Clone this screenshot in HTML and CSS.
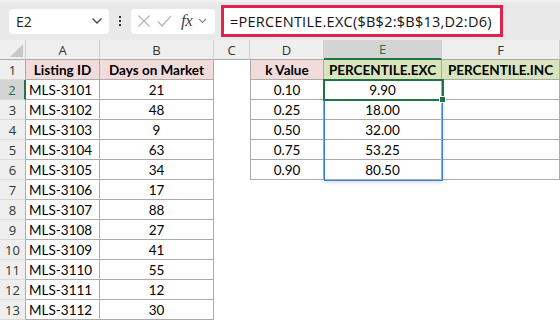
FILE: index.html
```html
<!DOCTYPE html>
<html>
<head>
    <meta charset="utf-8">
    <link rel="stylesheet" href="styles.css">
</head>
<body>
    <div class="fbar">
        <div class="namebox">
            <span>E2</span>
            <svg class="chev" width="12" height="8" viewBox="0 0 12 8"><path d="M1.5 1.5 L6 6 L10.5 1.5" fill="none" stroke="#444" stroke-width="1.3"/></svg>
        </div>
        <div class="dots"><i></i><i></i><i></i></div>
        <div class="fxbox">
            <svg width="14" height="14" viewBox="0 0 14 14"><path d="M1.5 1.5 L12.5 12.5 M12.5 1.5 L1.5 12.5" stroke="#b4b4b4" stroke-width="1.2" fill="none"/></svg>
            <svg width="15" height="14" viewBox="0 0 15 14"><path d="M1 7.5 L5 12 L14 2" stroke="#b4b4b4" stroke-width="1.2" fill="none"/></svg>
            <span class="fx">fx</span>
            <svg width="9" height="6" viewBox="0 0 9 6"><path d="M1 1 L4.5 4.5 L8 1" fill="none" stroke="#888" stroke-width="1.1"/></svg>
        </div>
        <div class="formula">=PERCENTILE.EXC($B$2:$B$13,D2:D6)</div>
    </div>

    <div class="sheet">
        <div class="corner"><svg width="18" height="18" viewBox="0 0 18 18"><path d="M17 4 L17 17 L4 17 Z" fill="#c8c8c8"/></svg></div>
        <div class="colhead">A</div>
        <div class="colhead">B</div>
        <div class="colhead">C</div>
        <div class="colhead">D</div>
        <div class="colhead sel">E</div>
        <div class="colhead">F</div>

        <div class="rowhead">1</div>
        <div class="c bd head pink">Listing ID</div>
        <div class="c bd head pink">Days on Market</div>
        <div class="c"></div>
        <div class="c bd head pink lft">k Value</div>
        <div class="c bd head green">PERCENTILE.EXC</div>
        <div class="c bd head green">PERCENTILE.INC</div>

        <div class="rowhead sel">2</div>
        <div class="c bd left">MLS-3101</div>
        <div class="c bd">21</div>
        <div class="c"></div>
        <div class="c bd lft">0.10</div>
        <div class="c bd">9.90</div>
        <div class="c bd"></div>

        <div class="rowhead">3</div>
        <div class="c bd left">MLS-3102</div>
        <div class="c bd">48</div>
        <div class="c"></div>
        <div class="c bd lft">0.25</div>
        <div class="c bd">18.00</div>
        <div class="c bd"></div>

        <div class="rowhead">4</div>
        <div class="c bd left">MLS-3103</div>
        <div class="c bd">9</div>
        <div class="c"></div>
        <div class="c bd lft">0.50</div>
        <div class="c bd">32.00</div>
        <div class="c bd"></div>

        <div class="rowhead">5</div>
        <div class="c bd left">MLS-3104</div>
        <div class="c bd">63</div>
        <div class="c"></div>
        <div class="c bd lft">0.75</div>
        <div class="c bd">53.25</div>
        <div class="c bd"></div>

        <div class="rowhead">6</div>
        <div class="c bd left">MLS-3105</div>
        <div class="c bd">34</div>
        <div class="c"></div>
        <div class="c bd lft">0.90</div>
        <div class="c bd">80.50</div>
        <div class="c bd"></div>

        <div class="rowhead">7</div>
        <div class="c bd left">MLS-3106</div>
        <div class="c bd">17</div>
        <div class="c span4"></div>

        <div class="rowhead">8</div>
        <div class="c bd left">MLS-3107</div>
        <div class="c bd">88</div>
        <div class="c span4"></div>

        <div class="rowhead">9</div>
        <div class="c bd left">MLS-3108</div>
        <div class="c bd">27</div>
        <div class="c span4"></div>

        <div class="rowhead">10</div>
        <div class="c bd left">MLS-3109</div>
        <div class="c bd">41</div>
        <div class="c span4"></div>

        <div class="rowhead">11</div>
        <div class="c bd left">MLS-3110</div>
        <div class="c bd">55</div>
        <div class="c span4"></div>

        <div class="rowhead">12</div>
        <div class="c bd left">MLS-3111</div>
        <div class="c bd">12</div>
        <div class="c span4"></div>

        <div class="rowhead">13</div>
        <div class="c bd left">MLS-3112</div>
        <div class="c bd">30</div>
        <div class="c span4"></div>

        <div class="spill"></div>
        <div class="active"><i></i></div>
    </div>
</body>
</html>
```

FILE: styles.css
```css
body, html {
    margin: 0;
    padding: 0;
    width: 100%;
    height: 100%;
    overflow: hidden;
    background: #fff;
}

/* formula bar */
.fbar {
    height: 40px;
    box-sizing: border-box;
    background: #e9e9e9;
    border-top: 2px solid #f2f2f2;
    display: flex;
    align-items: center;
    padding: 0 0 0 9px;
    font-family: "Open Sans", "Noto Sans", sans-serif;
}
.namebox {
    width: 100px;
    height: 25px;
    box-sizing: border-box;
    background: #fff;
    border-radius: 4px;
    display: flex;
    align-items: center;
    justify-content: space-between;
    padding: 0 6px 0 7px;
    font-size: 14px;
    color: #222;
}
.dots {
    width: 22px;
    display: flex;
    flex-direction: column;
    align-items: center;
    gap: 2px;
}
.dots i {
    width: 2px;
    height: 2px;
    background: #333;
}
.fxbox {
    width: 84px;
    height: 25px;
    box-sizing: border-box;
    background: #fff;
    border-radius: 4px;
    display: flex;
    align-items: center;
    padding: 0 4px 0 6px;
    gap: 6px;
}
.fx {
    font-family: "Liberation Serif", serif;
    font-style: italic;
    font-size: 17px;
    color: #444;
    margin-left: 3px;
    letter-spacing: -0.5px;
}
.formula {
    margin-left: 6px;
    width: 282px;
    height: 32px;
    box-sizing: border-box;
    background: #fff;
    border: 3px solid #e0234e;
    display: flex;
    align-items: center;
    padding-left: 6px;
    font-size: 14.5px;
    letter-spacing: 0.25px;
    color: #111;
    white-space: nowrap;
}

/* grid */
.sheet {
    position: relative;
    display: grid;
    grid-template-columns: 26px 74px 114px 36px 74px 118px 118px;
    grid-auto-rows: 20px;
    font-family: Lato, "Liberation Sans", sans-serif;
    font-size: 13.5px;
    color: #000;
}
.corner, .colhead, .rowhead {
    box-sizing: border-box;
    background: #efefef;
    color: #333;
    display: flex;
    align-items: center;
    justify-content: center;
    font-family: "Open Sans", "Noto Sans", sans-serif;
    font-size: 13px;
}
.corner {
    border-right: 1px solid #d0d0d0;
    border-bottom: 1px solid #ababab;
    align-items: flex-end;
    justify-content: flex-end;
    padding: 0 1px 1px 0;
}
.colhead {
    border-right: 1px solid #d0d0d0;
    border-bottom: 1px solid #ababab;
}
.colhead.sel {
    background: #d4d4d4;
    color: #217346;
    border-bottom: 2px solid #217346;
}
.rowhead {
    border-right: 1px solid #ababab;
    border-bottom: 1px solid #dadada;
}
.rowhead.sel {
    background: #d4d4d4;
    color: #217346;
    border-right: 2px solid #217346;
}
.c {
    box-sizing: border-box;
    display: flex;
    align-items: center;
    justify-content: center;
    white-space: nowrap;
    overflow: hidden;
}
.c.bd {
    border-right: 1px solid #ababab;
    border-bottom: 1px solid #ababab;
}
.c.lft {
    border-left: 1px solid #ababab;
}
.c.left {
    justify-content: flex-start;
    padding-left: 3px;
}
.c.head {
    font-weight: bold;
}
.pink {
    background: #f2dcdb;
}
.green {
    background: #d8e4bc;
}
.span4 {
    grid-column: span 4;
}

/* selection overlays */
.spill {
    position: absolute;
    left: 324px;
    top: 40px;
    width: 119px;
    height: 101px;
    box-sizing: border-box;
    border: 1px solid #3b7ddd;
    box-shadow: 0 2px 3px rgba(0, 0, 0, 0.12);
}
.active {
    position: absolute;
    left: 323px;
    top: 39px;
    width: 121px;
    height: 22px;
    box-sizing: border-box;
    border: 2px solid #217346;
}
.active i {
    position: absolute;
    right: -4px;
    bottom: -4px;
    width: 5px;
    height: 5px;
    background: #217346;
    border: 1px solid #fff;
}
```
